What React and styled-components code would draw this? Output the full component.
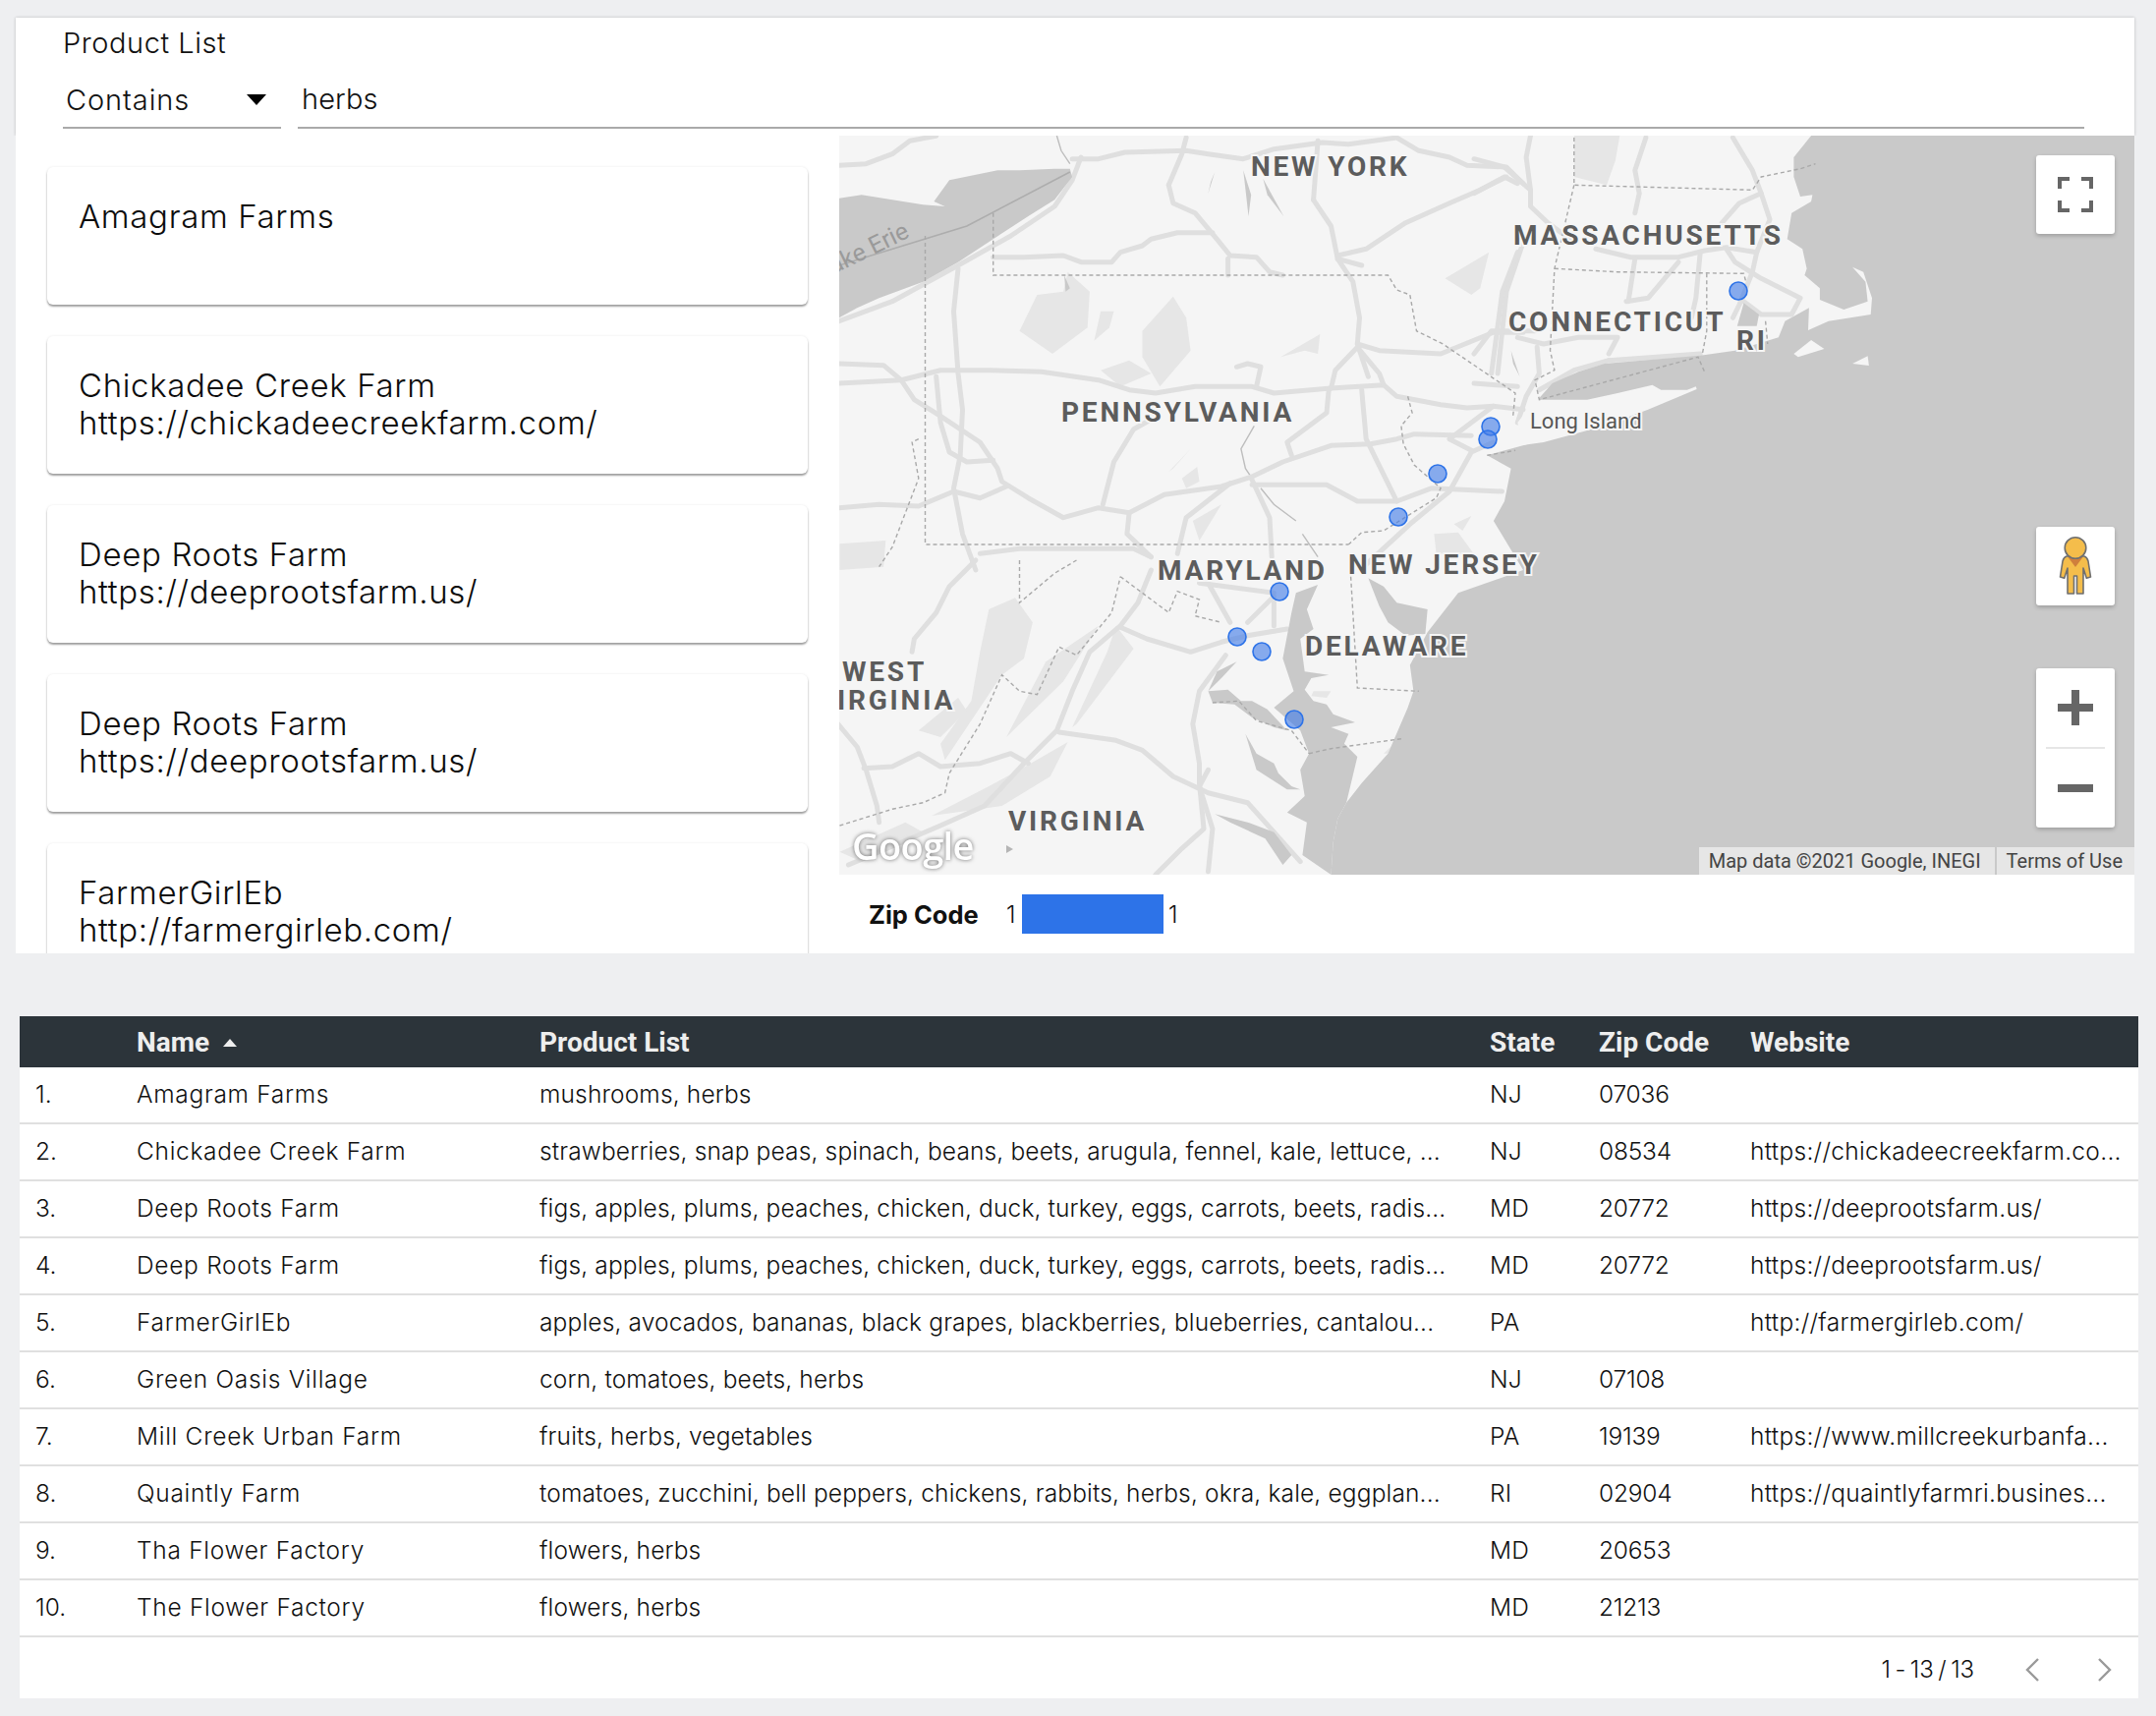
import React from "react";
import styled, { createGlobalStyle } from "styled-components";

const Global = createGlobalStyle`
  html, body { margin: 0; padding: 0; background: #eeeff1; }
  body { font-family: Inter, "Open Sans", sans-serif; color: #111; }
`;

const Page = styled.div`
  width: 2194px;
  height: 1746px;
  box-sizing: border-box;
  padding-top: 18px;
  overflow: hidden;
`;
const Panel = styled.section`
  margin-left: 16px;
  width: 2156px;
  height: 952px;
  background: #fff;
  display: flex;
  flex-direction: column;
`;
const FilterBar = styled.div`
  height: 120px;
  flex: none;
  box-sizing: border-box;
  padding: 9px 51px 0 48px;
  position: relative;
  z-index: 1;
  background: #fff;
  box-shadow: 0 0 3px rgba(0, 0, 0, 0.22);
  clip-path: inset(-6px -6px 0 -6px);
`;
const FilterLabel = styled.div`
  font-size: 29px;
  line-height: 34px;
  font-weight: 300;
  letter-spacing: 0.55px;
`;
const FilterRow = styled.div`
  display: flex;
  gap: 17px;
  margin-top: 20px;
`;
const SelectBox = styled.div`
  width: 222px;
  height: 50px;
  box-sizing: border-box;
  border-bottom: 2px solid #aaa;
  padding-left: 3px;
  display: flex;
  align-items: center;
  justify-content: space-between;
  padding-right: 15px;
  padding-bottom: 8px;
  font-size: 29px;
  font-weight: 300;
  letter-spacing: 0.9px;
`;
const Caret = styled.span`
  width: 0;
  height: 0;
  border-left: 10px solid transparent;
  border-right: 10px solid transparent;
  border-top: 11px solid #000;
`;
const TextInput = styled.div`
  flex: 1;
  height: 50px;
  box-sizing: border-box;
  border-bottom: 2px solid #aaa;
  padding-left: 4px;
  padding-bottom: 9px;
  display: flex;
  align-items: center;
  font-size: 29px;
  font-weight: 300;
  letter-spacing: 0.1px;
`;
const Body = styled.div`
  flex: 1;
  display: flex;
  min-height: 0;
`;
const CardList = styled.div`
  width: 838px;
  flex: none;
  box-sizing: border-box;
  padding: 32px 32px 0;
  display: flex;
  flex-direction: column;
  gap: 32px;
  overflow: hidden;
`;
const Card = styled.article`
  flex: none;
  height: 140px;
  box-sizing: border-box;
  padding: 31px 32px 32px;
  background: #fff;
  border-radius: 6px;
  box-shadow: 0 2px 2px rgba(0, 0, 0, 0.36), 0 0 3px rgba(0, 0, 0, 0.08);
  font-size: 33px;
  line-height: 38px;
  font-weight: 300;
  letter-spacing: 0.65px;
  color: #0c0c0c;
`;
const CardLine = styled.div`
  white-space: nowrap;
`;
const MapColumn = styled.div`
  flex: 1;
  min-width: 0;
  display: flex;
  flex-direction: column;
`;
const MapFrame = styled.div`
  position: relative;
  height: 752px;
  flex: none;
  overflow: hidden;
  background: #f5f5f5;
`;
const MapSvg = styled.svg`
  display: block;
`;
const CtrlBox = styled.div`
  position: absolute;
  left: 1218px;
  top: ${(p) => p.$top}px;
  width: 80px;
  height: ${(p) => p.$h || 80}px;
  background: #fff;
  border-radius: 3px;
  box-shadow: 0 2px 4px rgba(0, 0, 0, 0.22);
  display: flex;
  flex-direction: column;
  align-items: center;
  justify-content: center;
`;
const ZoomHalf = styled.div`
  height: 80px;
  width: 100%;
  flex: none;
  display: flex;
  align-items: center;
  justify-content: center;
`;
const ZoomDivider = styled.div`
  width: 60px;
  height: 2px;
  background: #e6e6e6;
  flex: none;
`;
const Attribution = styled.div`
  position: absolute;
  right: 0;
  bottom: 0;
  height: 28px;
  display: flex;
  gap: 2px;
  font-family: Roboto, sans-serif;
  font-size: 20px;
  line-height: 28px;
  color: #444;
`;
const AttrPiece = styled.span`
  background: #e6e6e6;
  padding: 0 ${(p) => p.$pr}px 0 10px;
  white-space: nowrap;
`;
const Legend = styled.div`
  flex: 1;
  display: flex;
  align-items: center;
  padding-left: 30px;
  font-size: 25px;
`;
const LegendTitle = styled.span`
  font-weight: 700;
  width: 140px;
  font-size: 25.5px;
  white-space: nowrap;
`;
const LegendTick = styled.span`
  font-weight: 300;
  width: ${(p) => p.$w}px;
  padding-left: ${(p) => p.$pl}px;
  box-sizing: border-box;
  font-size: 24px;
`;
const LegendBar = styled.div`
  width: 144px;
  height: 40px;
  background: #2d73e8;
`;

const TableCard = styled.section`
  margin: 64px 0 0 20px;
  width: 2156px;
  background: #fff;
`;
const cols = "103px 410px 967px 111px 154px 411px";
const HeadRow = styled.div`
  display: grid;
  grid-template-columns: ${cols};
  height: 52px;
  box-sizing: border-box;
  padding-top: 1px;
  background: #2c343a;
  color: #eee;
  font-family: Roboto, sans-serif;
  font-weight: 700;
  font-size: 28px;
  align-items: center;
`;
const HeadCell = styled.div`
  padding-left: 16px;
  display: flex;
  align-items: center;
  gap: 14px;
  white-space: nowrap;
`;
const SortUp = styled.span`
  width: 0;
  height: 0;
  border-left: 7px solid transparent;
  border-right: 7px solid transparent;
  border-bottom: 8px solid #eee;
`;
const Row = styled.div`
  display: grid;
  grid-template-columns: ${cols};
  height: 58px;
  box-sizing: border-box;
  padding-bottom: 2px;
  border-bottom: 2px solid #e0e0e0;
  align-items: center;
  font-size: 24.5px;
  font-weight: 300;
  color: #111;
`;
const Cell = styled.div`
  padding-left: 16px;
  white-space: nowrap;
  overflow: hidden;
  letter-spacing: ${(p) => p.$ls}px;
`;
const Pager = styled.div`
  height: 62px;
  box-sizing: border-box;
  padding: 3px 26px 0 0;
  display: flex;
  align-items: center;
  justify-content: flex-end;
  font-size: 24px;
  font-weight: 300;
`;
const PagerText = styled.span`
  margin-right: 51px;
  word-spacing: -2px;
  letter-spacing: -0.1px;
`;
const PagerBtn = styled.svg`
  display: block;
  margin-left: ${(p) => p.$ml}px;
`;

/* zoom-crop coordinate helpers */
const A = (pts) => pts.map((p) => [850 + p[0] / 2.24, 130 + p[1] / 3]);
const B = (pts) => pts.map((p) => [1500 + p[0] / 2.259, 130 + p[1] / 3]);
const C = (pts) => pts.map((p) => [850 + p[0] / 2.24, 570 + p[1] / 3]);
const str = (pts) => pts.map((p) => p[0].toFixed(1) + "," + p[1].toFixed(1)).join(" ");

const oceanPts = [
  ...B([[775,24],[735,90],[735,150],[750,210],[778,205],[775,225],[730,260],[720,340],[755,370],[765,430],[760,450],[795,490],[795,525],[850,555],[905,530],[900,470],[870,425],[895,440],[915,520],[912,570],[815,590],[768,618],[770,550],[715,590],[700,640],[600,680],[520,695],[300,720],[240,745],[180,780],[150,825],[125,965],[30,1000],[85,1040],[70,1140],[45,1200]]),
  ...C([[1568,30],[1420,100],[1350,220],[1310,320],[1318,400],[1305,450],[1260,590],[1200,680],[1165,740],[1145,790],[1135,860],[1130,960]]),
  [2172, 890],
  [2172, 138],
];
const longIsland = B([[140,830],[260,830],[330,810],[410,785],[430,800],[490,800],[510,790],[512,798],[400,860],[300,910],[160,960],[115,968],[100,900]]);
const islands = [
  B([[735,690],[775,648],[805,675],[745,700]]),
  B([[870,720],[905,697],[908,726]]),
];
const water = [
  C([[1100,75],[1050,100],[1040,160],[1030,230],[1020,300],[1045,400],[1000,450],[1060,520],[1080,590],[1060,640],[1070,720],[1030,770],[1075,800],[1065,900],[1130,960],[1135,860],[1145,790],[1165,740],[1190,600],[1160,560],[1170,530],[1130,510],[1185,495],[1135,470],[1120,440],[1090,430],[1070,395],[1085,360],[1125,350],[1070,340],[1060,240],[1090,210],[1075,150]]),
  C([[1215,55],[1250,80],[1280,130],[1350,150],[1345,225],[1300,230],[1260,190],[1240,140]]),
  C([[935,530],[960,590],[1000,620],[1010,650],[1040,690],[1060,700],[1030,700],[960,640]]),
  C([[850,400],[895,395],[925,430],[950,430],[985,455],[1030,520],[1000,510],[950,480],[910,440],[860,435]]),
  C([[865,775],[940,800],[1000,830],[1040,900],[1020,930],[980,850],[900,800]]),
  C([[850,400],[870,340],[915,310],[880,360]]),
  B([[620,535],[655,570],[650,605],[605,605]]),
  A([[865,135],[850,200],[856,165]]),
  A([[930,130],[948,205],[942,270],[936,200]]),
  A([[975,155],[1022,270],[985,205]]),
  A([[522,450],[535,490],[525,500]]),
  B([[85,680],[105,760],[90,720]]),
];
const rivers = [
  A([[955,910],[925,980],[935,1040],[945,1060]]),
  A([[970,1100],[1000,1150],[1050,1200]]),
  A([[1065,1240],[1100,1310]]),
  A([[505,24],[515,70],[535,110]]),
];
const lake = A([[9,215],[60,205],[200,235],[250,240],[225,225],[260,160],[370,130],[420,130],[500,125],[535,125],[540,150],[500,220],[440,270],[360,340],[280,410],[200,470],[100,520],[50,550],[9,580]]);
const parks = [
  A([[420,620],[460,510],[520,500],[530,440],[580,500],[575,610],[495,690]]),
  A([[700,620],[770,515],[800,580],[810,680],[740,790],[700,700]]),
  A([[605,740],[670,710],[720,750],[650,790]]),
  A([[605,560],[635,560],[625,610],[590,650]]),
  A([[1390,460],[1490,380],[1470,490],[1450,510]]),
  A([[1015,700],[1105,630],[1100,690],[1070,680]]),
  A([[760,1050],[810,980],[770,1040]]),
  A([[790,1070],[825,1035],[830,1080],[800,1100]]),
  A([[815,1200],[880,1150],[830,1260]]),
  A([[1365,1240],[1420,1235],[1455,1300],[1370,1300]]),
  A([[1410,1210],[1450,1185],[1430,1230]]),
  A([[10,1270],[115,1260],[110,1340],[10,1350]]),
  C([[350,150],[410,115],[450,190],[430,300],[380,350],[250,610],[240,560],[310,430],[330,280]]),
  C([[190,520],[280,420],[300,460],[240,540]]),
  C([[540,510],[620,280],[640,200],[680,270],[550,500]]),
  C([[480,310],[600,200],[520,370],[390,540]]),
  C([[350,690],[420,640],[530,555],[490,660],[380,750],[220,780]]),
  C([[10,890],[160,800],[200,830],[60,920]]),
  C([[1090,400],[1130,400],[1120,420],[1085,415]]),
  C([[1250,590],[1290,540],[1300,470],[1260,590]]),
  B([[230,24],[335,24],[325,100],[305,175],[230,150]]),
];
const roads = [
  A([[9,115],[70,110],[130,80],[170,40],[230,25]]),
  A([[540,95],[600,95],[660,75],[800,70],[850,80],[930,95],[1000,65],[1110,45],[1170,50],[1280,30],[1330,70],[1400,90],[1440,115],[1530,120],[1568,170]]),
  A([[760,175],[790,80],[800,30]]),
  A([[760,175],[770,230],[820,260],[870,340],[900,390],[960,395],[990,440],[1020,450]]),
  A([[895,450],[895,400]]),
  A([[360,395],[430,395],[520,390],[560,410],[630,410],[650,380],[700,360],[720,340],[780,320],[860,320]]),
  A([[1090,220],[1100,40]]),
  A([[1090,220],[1130,300],[1145,400],[1180,470],[1195,580],[1190,660],[1215,760]]),
  A([[1145,390],[1210,370],[1300,290],[1400,230],[1470,190],[1530,150]]),
  A([[1145,400],[1200,420]]),
  A([[9,590],[130,530],[280,420],[400,330],[500,240],[540,160],[560,90]]),
  A([[9,720],[110,725],[150,770],[240,740],[350,740],[470,745],[600,770],[670,800],[730,810],[820,790],[950,790],[1000,810],[1130,795],[1250,785],[1280,820],[1380,845],[1440,855],[1500,850],[1568,860]]),
  A([[9,780],[150,770]]),
  A([[280,430],[270,560],[280,750],[290,860],[285,1000],[270,1100],[290,1240],[320,1350]]),
  A([[150,770],[180,830],[240,880],[330,960],[370,1040],[380,1080],[440,1130],[520,1190],[600,1160],[670,1175],[750,1120],[880,1095],[950,1065],[1020,1020],[1130,970],[1220,965],[1280,950],[1320,935],[1450,940]]),
  A([[230,760],[240,900],[260,990],[300,1020],[360,1015]]),
  A([[9,1160],[100,1150],[190,1155],[270,1110],[330,1130],[390,1095]]),
  A([[610,1150],[635,1020],[680,920],[720,890]]),
  A([[670,1175],[665,1240],[720,1310]]),
  A([[780,1300],[800,1190],[900,1085]]),
  A([[950,1075],[990,1190],[995,1310]]),
  A([[950,1090],[1120,1090],[1190,1140],[1280,1140],[1360,1100],[1520,1110]]),
  A([[1200,800],[1210,950],[1280,1140]]),
  A([[1040,1000],[1030,960],[1120,870],[1125,800]]),
  A([[1130,795],[1140,740],[1190,670],[1240,750],[1250,785]]),
  A([[1190,660],[1240,680],[1380,690],[1500,625],[1568,625]]),
  A([[1200,1345],[1310,1210],[1400,1110],[1450,990],[1500,960]]),
  A([[1500,850],[1450,900],[1400,950],[1450,985]]),
  A([[1510,750],[1530,500],[1568,350]]),
  A([[960,790],[970,730],[940,720],[915,730]]),
  A([[330,1300],[420,1285],[600,1285],[680,1285],[720,1310]]),
  B([[0,95],[70,120],[130,190],[130,240],[170,290],[220,340]]),
  B([[0,200],[70,150],[100,170]]),
  B([[130,190],[120,90],[130,24]]),
  B([[280,370],[360,395],[470,395],[530,375],[580,365],[650,380]]),
  B([[520,380],[510,520],[500,580]]),
  B([[580,370],[600,410],[660,460],[750,520],[730,570],[660,570],[620,530]]),
  B([[650,380],[640,440],[610,540],[595,580]]),
  B([[350,530],[400,520],[470,410]]),
  B([[355,530],[370,400]]),
  B([[370,260],[380,200],[370,130],[395,30]]),
  B([[570,290],[610,230],[660,200],[640,130],[595,30]]),
  B([[660,200],[680,280],[650,380]]),
  B([[0,690],[40,620],[140,620]]),
  B([[100,640],[160,660],[240,640],[330,640],[310,690]]),
  B([[310,710],[520,690]]),
  B([[150,800],[230,740],[310,710]]),
  B([[145,670],[150,750],[120,820],[100,900]]),
  B([[40,750],[65,500],[100,380]]),
  B([[0,780],[100,790]]),
  C([[720,30],[690,130],[650,200],[580,280],[540,400],[505,520],[430,620],[340,750],[240,810],[100,890],[30,930]]),
  C([[650,205],[710,240],[810,280],[880,250],[940,230],[1030,210]]),
  C([[510,525],[640,550],[700,580],[770,660],[850,710],[940,740],[1000,830],[1060,920]]),
  C([[890,290],[830,400],[815,500],[830,620],[830,680],[840,820],[790,880],[730,960]]),
  C([[850,70],[900,190]]),
  C([[830,70],[1000,100]]),
  C([[1000,110],[940,190]]),
  C([[1000,130],[1000,200]]),
  C([[320,0],[260,80],[230,160],[180,240],[175,280]]),
  C([[0,490],[50,570],[70,640],[95,750],[100,800]]),
  C([[65,635],[130,630],[190,590],[240,630],[330,620],[400,590],[440,620]]),
  C([[850,640],[830,690],[860,820],[850,950]]),
];
const borders = [
  A([[205,330],[205,1272],[1170,1272]]),
  A([[360,260],[360,450],[1260,450],[1280,495],[1310,510],[1325,620],[1385,660],[1550,810],[1545,880]]),
  A([[1305,820],[1315,870],[1290,910],[1295,965],[1320,1030],[1380,1100],[1370,1130],[1250,1230],[1200,1235],[1170,1272]]),
  A([[190,950],[175,960],[190,1070],[130,1280],[100,1340]]),
  B([[230,30],[230,175],[640,190],[660,150],[750,125],[785,110]]),
  B([[230,175],[185,430],[175,680],[185,740],[140,770],[150,830],[515,700],[530,745]]),
  B([[185,430],[330,440],[620,445],[625,470]]),
  B([[535,445],[535,620],[525,690]]),
  B([[670,590],[675,660]]),
  B([[30,1000],[95,985]]),
  C([[420,0],[420,130],[500,40],[550,0]]),
  C([[650,50],[760,160],[780,95],[830,120],[820,170],[880,190]]),
  C([[10,810],[130,760],[200,740],[250,710],[260,650],[330,500],[380,350],[420,400],[460,410],[510,265],[550,290],[630,160],[650,50]]),
  C([[1175,50],[1190,390],[1330,400]]),
  C([[1080,590],[1130,575],[1290,545]]),
  C([[860,435],[920,430],[960,490],[1040,520],[1080,590]]),
];
const markers = [[1769,296],[1517,434],[1514,447],[1463,482],[1423,526],[1302,602],[1259,648],[1284,663],[1317,732]];
const labels = [
  ["NEW YORK", 1273, 179],
  ["MASSACHUSETTS", 1540, 249],
  ["CONNECTICUT", 1535, 337],
  ["RI", 1767, 356],
  ["PENNSYLVANIA", 1080, 429],
  ["MARYLAND", 1178, 590],
  ["NEW JERSEY", 1372, 584],
  ["DELAWARE", 1328, 667],
  ["WEST", 857, 693],
  ["VIRGINIA", 1026, 845],
];

const MapRoad = styled.polyline`
  fill: none;
  stroke: #dfdfdf;
  stroke-width: 5;
  stroke-linejoin: round;
  stroke-linecap: round;
`;
const MapRiver = styled.polyline`
  fill: none;
  stroke: #bdbdbd;
  stroke-width: 1.4;
`;
const MapBorder = styled.polyline`
  fill: none;
  stroke: #a9a9a9;
  stroke-width: 1.4;
  stroke-dasharray: 4 3;
`;
const PlaceLabel = styled.text`
  font-family: Roboto, sans-serif;
  font-weight: 700;
  font-size: 28px;
  letter-spacing: 2.8px;
  fill: #5c5c5c;
  stroke: #f5f5f5;
  stroke-width: 4px;
  paint-order: stroke;
`;
const MinorLabel = styled.text`
  font-family: Roboto, sans-serif;
  font-size: 22px;
  fill: #555;
  stroke: #f5f5f5;
  stroke-width: 4px;
  paint-order: stroke;
`;
const LakeLabel = styled.text`
  font-family: Roboto, sans-serif;
  font-size: 25px;
  fill: #9a9a9a;
`;
const GoogleMark = styled.text`
  font-family: "Open Sans", sans-serif;
  font-weight: 600;
  font-size: 38px;
  letter-spacing: -0.6px;
  fill: #fff;
  filter: drop-shadow(0 0 2px rgba(0, 0, 0, 0.55));
`;

const RegionMap = () => (
  <MapSvg width="1318" height="752" viewBox="854 138 1318 752">
    <rect x="854" y="138" width="1318" height="752" fill="#f5f5f5" />
    {parks.map((p, i) => (
      <polygon key={i} points={str(p)} fill="#e6e6e6" />
    ))}
    {rivers.map((p, i) => (
      <MapRiver key={i} points={str(p)} />
    ))}
    {roads.map((p, i) => (
      <MapRoad key={i} points={str(p)} />
    ))}
    <polygon points={str(lake)} fill="#c9c9c9" />
    {water.map((p, i) => (
      <polygon key={i} points={str(p)} fill="#c9c9c9" />
    ))}
    <polygon points={str(oceanPts)} fill="#c9c9c9" />
    <polygon points={str(longIsland)} fill="#f5f5f5" />
    {islands.map((p, i) => (
      <polygon key={i} points={str(p)} fill="#f5f5f5" />
    ))}
    <polyline points={str(A([[9,420],[300,300],[535,135]]))} fill="none" stroke="#adadad" strokeWidth="1.6" />
    {borders.map((p, i) => (
      <MapBorder key={i} points={str(p)} />
    ))}
    <LakeLabel x="0" y="0" transform="translate(836 285) rotate(-26)">Lake Erie</LakeLabel>
    {labels.map(([t, x, y]) => (
      <PlaceLabel key={t + x} x={x} y={y}>{t}</PlaceLabel>
    ))}
    <PlaceLabel x="972" y="722" textAnchor="end">VIRGINIA</PlaceLabel>
    <MinorLabel x="1557" y="436">Long Island</MinorLabel>
    {markers.map(([x, y], i) => (
      <circle key={i} cx={x} cy={y} r="9" fill="rgba(66,125,232,0.62)" stroke="#2d73e8" strokeWidth="1.6" />
    ))}
    <GoogleMark x="867" y="875">Google</GoogleMark>
    <polygon points="1024,860 1031,864 1024,868" fill="#b5b5b5" />
  </MapSvg>
);

const FullscreenIcon = () => (
  <svg width="36" height="36" viewBox="0 0 36 36" fill="#666">
    <path d="M0 0h12v4H4v8H0zM24 0h12v12h-4V4h-8zM0 24h4v8h8v4H0zM32 24h4v12H24v-4h8z" />
  </svg>
);
const Pegman = () => (
  <svg width="80" height="80" viewBox="0 0 80 80">
    <path d="M31 30h18q3 1 4 5l2.5 16-4.2 1.2L48 42v26h-6.500V50h-3v18H32V42l-3.300 10.200L24.500 51 27 35q1-4 4-5z" fill="#f4bd4b" stroke="#6f6f6f" strokeWidth="1.600" strokeLinejoin="round" />
    <path d="M32.500 31h15L40 41z" fill="#cf7f3c" />
    <circle cx="40" cy="21.500" r="10.800" fill="#f4bd4b" stroke="#6f6f6f" strokeWidth="1.600" />
  </svg>
);
const PlusIcon = () => (
  <svg width="36" height="36" viewBox="0 0 36 36" fill="#666">
    <path d="M14 0h8v14h14v8H22v14h-8V22H0v-8h14z" />
  </svg>
);
const MinusIcon = () => (
  <svg width="36" height="8" viewBox="0 0 36 8" fill="#666">
    <rect width="36" height="8" />
  </svg>
);

const cards = [
  ["Amagram Farms", ""],
  ["Chickadee Creek Farm", "https://chickadeecreekfarm.com/"],
  ["Deep Roots Farm", "https://deeprootsfarm.us/"],
  ["Deep Roots Farm", "https://deeprootsfarm.us/"],
  ["FarmerGirlEb", "http://farmergirleb.com/"],
];
const rows = [
  ["1.", "Amagram Farms", "mushrooms, herbs", "NJ", "07036", ""],
  ["2.", "Chickadee Creek Farm", "strawberries, snap peas, spinach, beans, beets, arugula, fennel, kale, lettuce, ...", "NJ", "08534", "https://chickadeecreekfarm.co..."],
  ["3.", "Deep Roots Farm", "figs, apples, plums, peaches, chicken, duck, turkey, eggs, carrots, beets, radis...", "MD", "20772", "https://deeprootsfarm.us/"],
  ["4.", "Deep Roots Farm", "figs, apples, plums, peaches, chicken, duck, turkey, eggs, carrots, beets, radis...", "MD", "20772", "https://deeprootsfarm.us/"],
  ["5.", "FarmerGirlEb", "apples, avocados, bananas, black grapes, blackberries, blueberries, cantalou...", "PA", "", "http://farmergirleb.com/"],
  ["6.", "Green Oasis Village", "corn, tomatoes, beets, herbs", "NJ", "07108", ""],
  ["7.", "Mill Creek Urban Farm", "fruits, herbs, vegetables", "PA", "19139", "https://www.millcreekurbanfa..."],
  ["8.", "Quaintly Farm", "tomatoes, zucchini, bell peppers, chickens, rabbits, herbs, okra, kale, eggplan...", "RI", "02904", "https://quaintlyfarmri.busines..."],
  ["9.", "Tha Flower Factory", "flowers, herbs", "MD", "20653", ""],
  ["10.", "The Flower Factory", "flowers, herbs", "MD", "21213", ""],
];
const columnSpacing = [0, 0.7, 0.15, 0.1, -0.2, 0.3];

export default function App() {
  return (
    <Page>
      <Global />
      <Panel>
        <FilterBar>
          <FilterLabel>Product List</FilterLabel>
          <FilterRow>
            <SelectBox>
              Contains
              <Caret />
            </SelectBox>
            <TextInput>herbs</TextInput>
          </FilterRow>
        </FilterBar>
        <Body>
          <CardList>
            {cards.map((c, i) => (
              <Card key={i}>
                <CardLine>{c[0]}</CardLine>
                <CardLine>{c[1]}</CardLine>
              </Card>
            ))}
          </CardList>
          <MapColumn>
            <MapFrame>
              <RegionMap />
              <CtrlBox $top={20}><FullscreenIcon /></CtrlBox>
              <CtrlBox $top={398}><Pegman /></CtrlBox>
              <CtrlBox $top={542} $h={162}>
                <ZoomHalf><PlusIcon /></ZoomHalf>
                <ZoomDivider />
                <ZoomHalf><MinusIcon /></ZoomHalf>
              </CtrlBox>
              <Attribution>
                <AttrPiece $pr={14}>Map data ©2021 Google, INEGI</AttrPiece>
                <AttrPiece $pr={12}>Terms of Use</AttrPiece>
              </Attribution>
            </MapFrame>
            <Legend>
              <LegendTitle>Zip Code</LegendTitle>
              <LegendTick $w={16} $pl={0}>1</LegendTick>
              <LegendBar />
              <LegendTick $w={24} $pl={5}>1</LegendTick>
            </Legend>
          </MapColumn>
        </Body>
      </Panel>
      <TableCard>
        <HeadRow>
          <HeadCell />
          <HeadCell>Name<SortUp /></HeadCell>
          <HeadCell>Product List</HeadCell>
          <HeadCell>State</HeadCell>
          <HeadCell>Zip Code</HeadCell>
          <HeadCell>Website</HeadCell>
        </HeadRow>
        {rows.map((r) => (
          <Row key={r[0]}>
            {r.map((v, i) => (
              <Cell key={i} $ls={columnSpacing[i]}>{v}</Cell>
            ))}
          </Row>
        ))}
        <Pager>
          <PagerText>1 - 13 / 13</PagerText>
          <PagerBtn width="16" height="26" viewBox="0 0 16 26" $ml={0}>
            <polyline points="14,2 3,13 14,24" fill="none" stroke="#9a9a9a" strokeWidth="2.400" />
          </PagerBtn>
          <PagerBtn width="16" height="26" viewBox="0 0 16 26" $ml={58}>
            <polyline points="2,2 13,13 2,24" fill="none" stroke="#9a9a9a" strokeWidth="2.400" />
          </PagerBtn>
        </Pager>
      </TableCard>
    </Page>
  );
}
